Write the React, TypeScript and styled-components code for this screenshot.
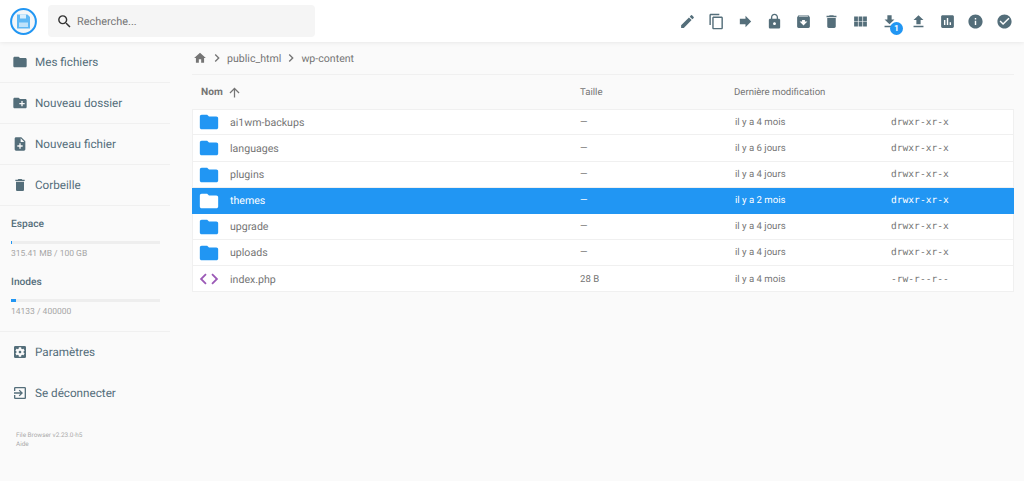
import styled, { createGlobalStyle } from "styled-components";
import {
  MdModeEdit,
  MdContentCopy,
  MdForward,
  MdLock,
  MdArchive,
  MdDelete,
  MdViewModule,
  MdFileDownload,
  MdFileUpload,
  MdInsertChart,
  MdInfo,
  MdCheckCircle,
  MdSearch,
  MdFolder,
  MdCreateNewFolder,
  MdNoteAdd,
  MdSettingsApplications,
  MdExitToApp,
  MdHome,
  MdChevronRight,
  MdArrowUpward,
  MdCode,
} from "react-icons/md";

const GlobalStyle = createGlobalStyle`
  html, body {
    margin: 0;
    height: 100%;
    background: #fafafa;
    font-family: Roboto, "Liberation Sans", sans-serif;
    text-rendering: geometricPrecision;
    overflow: hidden;
  }
  * { box-sizing: border-box; }
`;

const Page = styled.div`
  width: 1024px;
  height: 481px;
  display: flex;
  flex-direction: column;
`;

const Header = styled.header`
  height: 42px;
  flex-shrink: 0;
  background: #fff;
  box-shadow: 0 0 5px rgba(0, 0, 0, 0.1);
  display: flex;
  align-items: center;
  padding: 0 5px 0 10px;
  position: relative;
`;

const Logo = styled.div`
  width: 27px;
  height: 27px;
  flex-shrink: 0;
  svg {
    display: block;
  }
`;

const SearchBox = styled.div`
  width: 267px;
  height: 32px;
  margin-left: 11px;
  background: #f5f5f5;
  border-radius: 4px;
  display: flex;
  align-items: center;
  padding-left: 8px;
  gap: 4px;
  font-size: 10.9px;
  color: #757575;
  svg {
    font-size: 17px;
    color: #333;
  }
`;

const Toolbar = styled.div`
  margin-left: auto;
  display: flex;
  align-items: center;
`;

const ToolButton = styled.div`
  width: 28.8px;
  height: 32px;
  display: flex;
  align-items: center;
  justify-content: center;
  color: #546e7a;
  font-size: 17px;
  position: relative;
`;

const Badge = styled.span`
  position: absolute;
  left: 15px;
  top: 17px;
  width: 13px;
  height: 13px;
  border-radius: 50%;
  background: #2196f3;
  color: #fff;
  font-size: 8.5px;
  font-weight: 700;
  display: flex;
  align-items: center;
  justify-content: center;
`;

const Body = styled.div`
  flex: 1;
  display: flex;
  min-height: 0;
`;

const Sidebar = styled.aside`
  width: 170px;
  flex-shrink: 0;
  display: flex;
  flex-direction: column;
`;

const NavItem = styled.div<{ $divider?: boolean }>`
  height: 41px;
  display: flex;
  align-items: center;
  padding-left: 12px;
  gap: 7px;
  font-size: 11.7px;
  color: #546e7a;
  border-bottom: 1px solid ${(p) => (p.$divider ? "#f0f0f0" : "transparent")};
  svg {
    font-size: 16px;
    flex-shrink: 0;
  }
`;

const Usage = styled.div`
  padding: 12px 10px 13px 11px;
  border-bottom: 1px solid #f0f0f0;
  display: flex;
  flex-direction: column;
`;

const UsageTitle = styled.div<{ $gap?: boolean }>`
  font-size: 10.2px;
  font-weight: 500;
  line-height: 13px;
  color: #546e7a;
  margin-top: ${(p) => (p.$gap ? "15.5px" : "0")};
`;

const Track = styled.div`
  width: 149px;
  height: 3px;
  margin-top: 10px;
  background: #eeeeee;
`;

const Fill = styled.div`
  height: 100%;
  background: #2196f3;
`;

const UsageText = styled.div`
  font-size: 8.5px;
  line-height: 11px;
  margin-top: 5px;
  color: #a6a6a6;
`;

const Credits = styled.div`
  margin-top: 17px;
  padding-left: 16px;
  font-size: 6.4px;
  line-height: 9px;
  color: #aaaaaa;
`;

const Main = styled.main`
  flex: 1;
  min-width: 0;
  padding: 0 10px 0 22px;
`;

const Breadcrumbs = styled.nav`
  height: 33px;
  display: flex;
  align-items: center;
  padding-left: 1px;
  border-bottom: 1px solid #f0f0f0;
  color: #757575;
  font-size: 10.6px;
  svg {
    flex-shrink: 0;
  }
`;

const HomeIcon = styled(MdHome)`
  font-size: 14px;
`;

const Chevron = styled(MdChevronRight)`
  font-size: 16px;
  margin: 0 2px;
`;

const ListHead = styled.div`
  height: 34.3px;
  display: grid;
  grid-template-columns: 388px 154px 157px 1fr;
  align-items: center;
  font-size: 9.6px;
  color: #757575;
`;

const NameHead = styled.div`
  display: flex;
  align-items: center;
  gap: 4px;
  padding-left: 9px;
  font-weight: 700;
  font-size: 10.2px;
  svg {
    font-size: 15px;
  }
`;

const List = styled.div`
  background: #fff;
`;

const Row = styled.div<{ $selected?: boolean }>`
  height: 26.14px;
  padding-top: 1px;
  display: grid;
  grid-template-columns: 387px 154px 157px 1fr;
  align-items: center;
  font-size: 9.6px;
  background: ${(p) => (p.$selected ? "#2196f3" : "#fff")};
  color: ${(p) => (p.$selected ? "#fff" : "#757575")};
  border: 1px solid ${(p) => (p.$selected ? "#2196f3" : "#f0f0f0")};
  border-top: none;
  &:first-child {
    border-top: 1px solid #f0f0f0;
    padding-top: 0;
  }
`;

const NameCell = styled.div`
  display: flex;
  align-items: center;
  font-size: 10.6px;
  padding-left: 5px;
  gap: 10px;
`;

const FileIcon = styled.span<{ $color: string }>`
  width: 22px;
  display: flex;
  align-items: center;
  justify-content: center;
  font-size: 22px;
  color: ${(p) => p.$color};
`;

const DateCell = styled.div`
  padding-left: 1px;
`;

const Perm = styled.div`
  font-family: "DejaVu Sans Mono", "Liberation Mono", monospace;
  font-size: 9.6px;
`;

const tools = [
  MdModeEdit,
  MdContentCopy,
  MdForward,
  MdLock,
  MdArchive,
  MdDelete,
  MdViewModule,
  MdFileDownload,
  MdFileUpload,
  MdInsertChart,
  MdInfo,
  MdCheckCircle,
];

const files = [
  { name: "ai1wm-backups", size: "—", date: "il y a 4 mois", perm: "drwxr-xr-x" },
  { name: "languages", size: "—", date: "il y a 6 jours", perm: "drwxr-xr-x" },
  { name: "plugins", size: "—", date: "il y a 4 jours", perm: "drwxr-xr-x" },
  { name: "themes", size: "—", date: "il y a 2 mois", perm: "drwxr-xr-x", selected: true },
  { name: "upgrade", size: "—", date: "il y a 4 jours", perm: "drwxr-xr-x" },
  { name: "uploads", size: "—", date: "il y a 4 jours", perm: "drwxr-xr-x" },
  { name: "index.php", size: "28 B", date: "il y a 4 mois", perm: "-rw-r--r--", code: true },
];

const App = () => {
  return (
    <Page>
      <GlobalStyle />
      <Header>
        <Logo>
          <svg width="27" height="27" viewBox="0 0 27 27">
            <circle cx="13.5" cy="13.5" r="12.4" fill="#f4f6f8" stroke="#2196f3" strokeWidth="2" />
            <path d="M7 6.5h10.5l2.5 2.5v11.5H7z" fill="#5fb8f5" />
            <rect x="10" y="6.5" width="6" height="4" fill="#d9eefc" />
            <rect x="9" y="14.5" width="9" height="4.5" fill="#bfe2fa" />
          </svg>
        </Logo>
        <SearchBox>
          <MdSearch />
          Recherche...
        </SearchBox>
        <Toolbar>
          {tools.map((Icon, i) => (
            <ToolButton key={i}>
              <Icon />
              {Icon === MdFileDownload && <Badge>1</Badge>}
            </ToolButton>
          ))}
        </Toolbar>
      </Header>
      <Body>
        <Sidebar>
          <NavItem $divider>
            <MdFolder />
            Mes fichiers
          </NavItem>
          <NavItem $divider>
            <MdCreateNewFolder />
            Nouveau dossier
          </NavItem>
          <NavItem $divider>
            <MdNoteAdd />
            Nouveau fichier
          </NavItem>
          <NavItem $divider>
            <MdDelete />
            Corbeille
          </NavItem>
          <Usage>
            <UsageTitle>Espace</UsageTitle>
            <Track>
              <Fill style={{ width: "1%" }} />
            </Track>
            <UsageText>315.41 MB / 100 GB</UsageText>
            <UsageTitle $gap>Inodes</UsageTitle>
            <Track>
              <Fill style={{ width: `${(14133 / 400000) * 100}%` }} />
            </Track>
            <UsageText>14133 / 400000</UsageText>
          </Usage>
          <NavItem>
            <MdSettingsApplications />
            Paramètres
          </NavItem>
          <NavItem>
            <MdExitToApp />
            Se déconnecter
          </NavItem>
          <Credits>
            File Browser v2.23.0-h5
            <br />
            Aide
          </Credits>
        </Sidebar>
        <Main>
          <Breadcrumbs>
            <HomeIcon />
            <Chevron />
            public_html
            <Chevron />
            wp-content
          </Breadcrumbs>
          <ListHead>
            <NameHead>
              Nom
              <MdArrowUpward />
            </NameHead>
            <div>Taille</div>
            <div>Dernière modification</div>
          </ListHead>
          <List>
            {files.map((f) => (
              <Row key={f.name} $selected={f.selected}>
                <NameCell>
                  <FileIcon $color={f.selected ? "#fff" : f.code ? "#9b59b6" : "#2196f3"}>
                    {f.code ? <MdCode /> : <MdFolder />}
                  </FileIcon>
                  {f.name}
                </NameCell>
                <div>{f.size}</div>
                <DateCell>{f.date}</DateCell>
                <Perm>{f.perm}</Perm>
              </Row>
            ))}
          </List>
        </Main>
      </Body>
    </Page>
  );
};

export default App;
